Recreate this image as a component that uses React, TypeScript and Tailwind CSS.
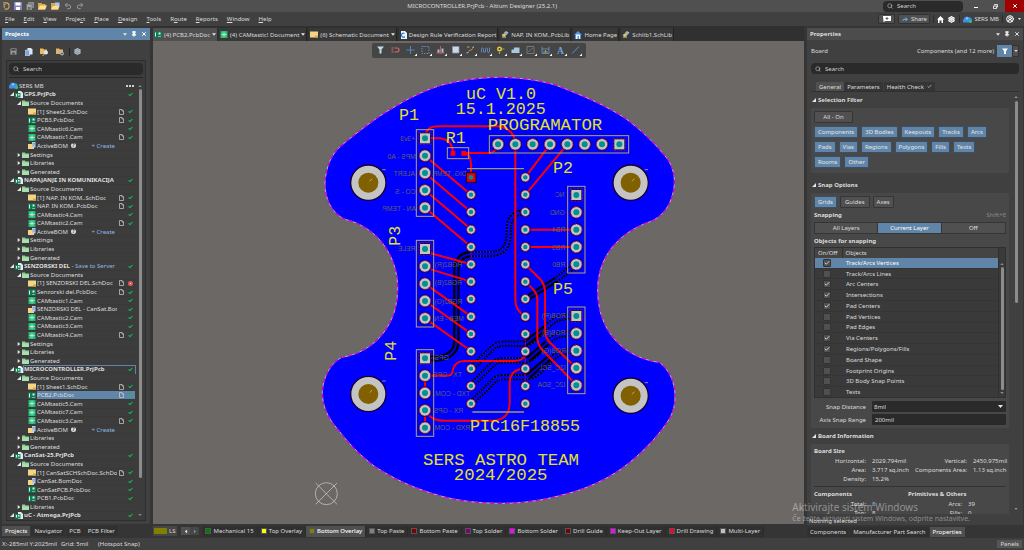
import React, { useState } from 'react';
import { Search, Settings, CircleUserRound, Pin, X, Check, Undo2, Redo2 } from 'lucide-react';

type TreeRow = {
  kind: 'project' | 'group' | 'file';
  name: string;
  icon?: 'sch' | 'pcb' | 'cam' | 'bom';
  open?: boolean;
  doc?: boolean;
  status?: 'ok' | 'error';
  link?: string;
  create?: boolean;
  selected?: boolean;
  focused?: boolean;
};

const project = (name: string, extra: Partial<TreeRow> = {}): TreeRow => ({ kind: 'project', name, open: true, status: 'ok', ...extra });
const group = (name: string, open = false): TreeRow => ({ kind: 'group', name, open });
const file = (icon: TreeRow['icon'], name: string, doc = false, extra: Partial<TreeRow> = {}): TreeRow => ({
  kind: 'file',
  icon,
  name,
  doc,
  status: 'ok',
  ...extra,
});
const activeBom: TreeRow = { kind: 'file', icon: 'bom', name: 'ActiveBOM', create: true };

const treeRows: TreeRow[] = [
  project('GPS.PrjPcb'),
  group('Source Documents', true),
  file('sch', '[1] Sheet2.SchDoc', true),
  file('pcb', 'PCB3.PcbDoc', true),
  file('cam', 'CAMtastic6.Cam'),
  file('cam', 'CAMtastic1.Cam', true),
  activeBom,
  group('Settings'),
  group('Libraries'),
  group('Generated'),
  project('NAPAJANJE IN KOMUNIKACIJA'),
  group('Source Documents', true),
  file('sch', '[1] NAP. IN KOM..SchDoc', true),
  file('pcb', 'NAP. IN KOM..PcbDoc', true),
  file('cam', 'CAMtastic4.Cam'),
  file('cam', 'CAMtastic2.Cam', true),
  activeBom,
  group('Settings'),
  group('Libraries'),
  group('Generated'),
  project('SENZORSKI DEL', { link: 'Save to Server' }),
  group('Source Documents', true),
  file('sch', '[1] SENZORSKI DEL.SchDoc', true, { status: 'error' }),
  file('pcb', 'Senzorski del.PcbDoc', true),
  file('cam', 'CAMtastic1.Cam'),
  file('bom', 'SENZORSKI DEL - CanSat.BomDoc'),
  file('cam', 'CAMtastic2.Cam'),
  file('cam', 'CAMtastic3.Cam'),
  file('cam', 'CAMtastic4.Cam', true),
  group('Settings'),
  group('Libraries'),
  group('Generated'),
  project('MICROCONTROLLER.PrjPcb', { focused: true }),
  group('Source Documents', true),
  file('sch', '[1] Sheet1.SchDoc', true),
  file('pcb', 'PCB2.PcbDoc', true, { selected: true }),
  file('cam', 'CAMtastic5.Cam'),
  file('cam', 'CAMtastic7.Cam'),
  file('cam', 'CAMtastic3.Cam', true),
  activeBom,
  group('Libraries'),
  group('Generated'),
  project('CanSat-25.PrjPcb'),
  group('Source Documents', true),
  file('sch', '[1] CanSatSCHSchDoc.SchDoc', true),
  file('bom', 'CanSat.BomDoc'),
  file('pcb', 'CanSatPCB.PcbDoc'),
  file('pcb', 'PCB1.PcbDoc'),
  group('Libraries'),
  project('uC - Atmega.PrjPcb'),
];

const menus = ['File', 'Edit', 'View', 'Project', 'Place', 'Design', 'Tools', 'Route', 'Reports', 'Window', 'Help'];
const accessKeys = [0, 0, 0, 5, 0, 0, 0, 1, 0, 0, 0];

const layers = [
  { name: 'Mechanical 15', color: '#008000' },
  { name: 'Top Overlay', color: '#ffff00' },
  { name: 'Bottom Overlay', color: '#808000', active: true },
  { name: 'Top Paste', color: '#808080' },
  { name: 'Bottom Paste', color: '#800000' },
  { name: 'Top Solder', color: '#800080' },
  { name: 'Bottom Solder', color: '#ff00ff' },
  { name: 'Drill Guide', color: '#800000' },
  { name: 'Keep-Out Layer', color: '#ff00ff' },
  { name: 'Drill Drawing', color: '#ff002a' },
  { name: 'Multi-Layer', color: '#c0c0c0' },
];

const filterRows = [
  ['Components', '3D Bodies', 'Keepouts', 'Tracks', 'Arcs'],
  ['Pads', 'Vias', 'Regions', 'Polygons', 'Fills', 'Texts'],
  ['Rooms', 'Other'],
];

const snapObjects: [string, boolean][] = [
  ['Track/Arcs Vertices', true],
  ['Track/Arcs Lines', false],
  ['Arc Centers', true],
  ['Intersections', true],
  ['Pad Centers', true],
  ['Pad Vertices', false],
  ['Pad Edges', false],
  ['Via Centers', true],
  ['Regions/Polygons/Fills', true],
  ['Board Shape', false],
  ['Footprint Origins', false],
  ['3D Body Snap Points', false],
  ['Texts', false],
];

/* ---------- small icons ---------- */

function FileIcon({ icon }: { icon: string }) {
  return (
    <svg viewBox="0 0 16 14" className="h-[7px] w-2 shrink-0">
      {icon === 'sch' && (
        <>
          <rect y="1" width="16" height="12" fill="#f3d583" />
          <path d="M10 9h6v4h-6z" fill="#d6a94c" />
        </>
      )}
      {icon === 'pcb' && (
        <>
          <rect y="1" width="16" height="12" fill="#107a54" />
          <path d="M2 3h2v8H2zM9 3h4v4H9zM8 10h6v1H8z" fill="#d5f5e5" />
        </>
      )}
      {icon === 'cam' && (
        <>
          <rect x="1" width="14" height="14" fill="#1fb573" />
          <path d="M8 1v12M2 7h12M4 3l8 8M12 3l-8 8" stroke="#c9f7de" strokeWidth="1.3" />
        </>
      )}
      {icon === 'bom' && (
        <>
          <rect y="4" width="12" height="10" fill="#f3d583" />
          <path d="M8 0h7v11H8z" fill="#b9cbe6" />
          <path d="M9 3h5M9 6h5" stroke="#5677a5" />
        </>
      )}
    </svg>
  );
}

function ProjectIcon() {
  return (
    <svg viewBox="0 0 16 14" className="h-[7px] w-2 shrink-0">
      <path d="M6 0h6l4 4v10H6z" fill="#e4ecf2" />
      <rect y="4" width="11" height="9" fill="#158a60" />
      <path d="M2 6h2v5H2zM6 6h3v3H6z" fill="#d5f5e5" />
    </svg>
  );
}

function FolderIcon() {
  return (
    <svg viewBox="0 0 14 12" className="h-[6px] w-[7px] shrink-0">
      <path d="M0 1h6l1 2h7v9H0z" fill="#8fcf96" />
      <path d="M0 5h14v7H0z" fill="#a9dfae" />
    </svg>
  );
}

function Arrow({ open }: { open?: boolean }) {
  return (
    <svg viewBox="0 0 6 6" className="h-[4px] w-[4px] shrink-0">
      <path d={open ? 'M6 0v6H0z' : 'M1 0l4 3-4 3z'} fill="#e6e6e6" />
    </svg>
  );
}

function Caret({ className = 'h-[3px] w-[5px]' }: { className?: string }) {
  return (
    <svg viewBox="0 0 10 6" className={`${className} shrink-0`}>
      <path d="M0 0h10L5 6z" fill="#e6e6e6" />
    </svg>
  );
}

function Cloud() {
  return (
    <svg viewBox="0 0 18 14" className="h-[7px] w-[9px] shrink-0">
      <path d="M1 13a4 4 0 0 1 1-7 5 5 0 0 1 9-3 5 5 0 0 1 3 10z" fill="#3c8fe6" />
      <path d="M5 4a5 5 0 0 1 7 0l-4 4z" fill="#8cc5ff" />
      <circle cx="15" cy="11" r="3" fill="#35c46a" />
    </svg>
  );
}

function DocIcon() {
  return (
    <svg viewBox="0 0 10 12" className="h-[6px] w-[5px]">
      <path d="M1 1h5l3 3v7H1zM6 1v3h3" fill="none" stroke="#d0d0d0" strokeWidth="1.4" />
    </svg>
  );
}

function PanelButtons() {
  return (
    <div className="flex items-center gap-1">
      <button aria-label="Panel menu"><Caret className="h-[3px] w-1" /></button>
      <button aria-label="Pin panel"><Pin className="h-[6px] w-[6px] fill-white" strokeWidth={3} /></button>
      <button aria-label="Close panel"><X className="h-[6px] w-[6px]" strokeWidth={4} /></button>
    </div>
  );
}

function SearchBox({ label, className }: { label: string; className: string }) {
  return (
    <label className={`flex items-center gap-1 rounded-sm bg-[#2a2a2a] px-1 ${className}`}>
      <Search className="h-[6px] w-[6px] shrink-0" strokeWidth={2} />
      <input aria-label={label} placeholder="Search" className="w-full min-w-0 bg-transparent outline-none placeholder:text-[#d0d0d0]" />
    </label>
  );
}

/* ---------- title bar and menu ---------- */

function TitleBar() {
  return (
    <header className="shrink-0">
      <div className="grid h-3 grid-cols-3 items-center bg-[#505050]">
        <div className="flex items-center gap-[4px] pl-[2px]">
          <svg viewBox="0 0 16 18" className="h-[8px] w-[8px]">
            <path d="M2 2h6a7 7 0 0 1 0 14H5M2 6h5M4 13V8" fill="none" stroke="#d2ad60" strokeWidth="2.4" />
          </svg>
          <button aria-label="Save">
            <svg viewBox="0 0 16 16" className="h-2 w-2">
              <path d="M0 0h16v16H0z" fill="#8181c4" />
              <path d="M3 1h10v6H3zM4 10h8v6H4z" fill="#fff" />
            </svg>
          </button>
          <button aria-label="Save all">
            <svg viewBox="0 0 16 16" className="h-2 w-2">
              <path d="M4 0h12v12H4z" fill="#8c8c8c" />
              <path d="M1 4h11v12H1z" fill="#a5a5a5" stroke="#5a5a5a" />
              <path d="M4 10h5v5H4z" fill="#666" />
            </svg>
          </button>
          <button aria-label="Open">
            <svg viewBox="0 0 18 16" className="h-2 w-[9px]">
              <path d="M0 2h7l2 2h6v11H0z" fill="#d9a74a" />
              <path d="M4 7h14l-4 8H0z" fill="#ffdf8e" />
            </svg>
          </button>
          <button aria-label="Open project">
            <svg viewBox="0 0 18 16" className="h-2 w-[9px]">
              <path d="M0 2h7l2 2h6v11H0z" fill="#d9a74a" />
              <path d="M8 1h9v8H8z" fill="#aacbed" />
              <path d="M4 8h13l-3 7H0z" fill="#ffdf8e" />
            </svg>
          </button>
          <button aria-label="Undo"><Undo2 className="h-2 w-2 text-[#9a9a9a]" strokeWidth={3} /></button>
          <button aria-label="Redo"><Redo2 className="h-2 w-2 text-[#9a9a9a]" strokeWidth={3} /></button>
        </div>
        <h1 className="whitespace-nowrap pl-[66px]">MICROCONTROLLER.PrjPcb - Altium Designer (25.2.1)</h1>
        <div className="flex h-full items-center justify-end">
          <SearchBox label="Search everywhere" className="h-[11px] w-20" />
          <button aria-label="Minimize" className="ml-1 flex h-full w-[18px] items-end justify-center pb-1">
            <span className="h-px w-1 bg-white" />
          </button>
          <button aria-label="Restore" className="flex h-full w-[20px] items-center justify-center">
            <svg viewBox="0 0 10 10" className="h-[5px] w-[5px]">
              <path d="M3 3V1h6v5H7M1 4h6v5H1z" fill="none" stroke="#fff" strokeWidth="1.6" />
            </svg>
          </button>
          <button aria-label="Close" className="flex h-full w-[19px] items-center justify-center bg-[#a00000]">
            <X className="h-[6px] w-[6px] text-white" strokeWidth={4} />
          </button>
        </div>
      </div>
      <div className="flex h-[14px] items-center justify-between bg-[#404040]">
        <nav className="flex gap-[9px] pl-[5px]">
          {menus.map((menu, i) => (
            <button key={menu}>
              {menu.slice(0, accessKeys[i])}
              <u>{menu[accessKeys[i]]}</u>
              {menu.slice(accessKeys[i] + 1)}
            </button>
          ))}
        </nav>
        <div className="flex items-center gap-[3px] pr-[3px]">
          <button aria-label="Comment" className="flex h-[10px] w-[17px] items-center justify-center rounded-[1px] border border-[#303030] bg-[#505050]">
            <svg viewBox="0 0 16 12" className="h-[6px] w-2">
              <path d="M0 0h16v10H5l-4 2z" fill="#fff" />
              <path d="M8 2v6M5 5h6" stroke="#444" strokeWidth="1.6" />
            </svg>
          </button>
          <button className="flex h-[10px] w-8 items-center justify-center gap-[3px] rounded-[1px] border border-[#303030] bg-[#505050]">
            <svg viewBox="0 0 12 10" className="h-[5px] w-[6px]">
              <path d="M0 9c0-4 3-6 7-6V0l5 5-5 4V6C4 6 2 7 0 9z" fill="#5aa2e8" />
            </svg>
            Share
          </button>
          <span className="h-2 w-px bg-[#2c2c2c]" />
          <button aria-label="Home">
            <svg viewBox="0 0 14 14" className="h-[7px] w-[7px]">
              <path d="M0 7l7-7 7 7h-2v7H9V9H5v5H2V7z" fill="#fff" />
            </svg>
          </button>
          <button aria-label="Settings" className="mx-px"><Settings className="h-[7px] w-[7px] text-white" strokeWidth={4} /></button>
          <span className="h-2 w-px bg-[#2c2c2c]" />
          <button className="flex items-center gap-[2px]"><Cloud />SERS MB</button>
          <span className="h-2 w-px bg-[#2c2c2c]" />
          <button aria-label="Account" className="flex items-center gap-1">
            <CircleUserRound className="h-2 w-2 text-white" strokeWidth={3} />
            <Caret className="h-[2px] w-[3px]" />
          </button>
        </div>
      </div>
    </header>
  );
}

/* ---------- left panel ---------- */

function TreeItem({ row }: { row: TreeRow }) {
  const indent = row.kind === 'project' ? 'pl-[3px]' : row.kind === 'group' ? 'pl-[10px]' : 'pl-[20px]';
  return (
    <li className={`flex min-h-0 flex-1 items-center border-t border-[#393939] ${indent}`}>
      {row.kind !== 'file' && <Arrow open={row.open} />}
      <span className="ml-[1px] mr-[1px] flex items-center">
        {row.kind === 'project' && <ProjectIcon />}
        {row.kind === 'group' && <FolderIcon />}
        {row.icon && <FileIcon icon={row.icon} />}
      </span>
      <div
        className={`flex h-full min-w-0 flex-1 items-center ${row.selected ? 'bg-[#6085a8]' : ''} ${
          row.focused ? 'outline outline-[#6085a8]' : ''
        }`}
      >
        <span className={`min-w-0 overflow-hidden whitespace-nowrap ${row.kind === 'project' ? 'font-bold' : ''}`}>
          {row.name}
          {row.link && (
            <span className="font-normal">
              {' - '}
              <a href="#save" className="text-[#8cb8e4]">{row.link}</a>
            </span>
          )}
        </span>
        {row.create && (
          <>
            <span className="ml-[3px] flex h-[5px] w-[5px] items-center justify-center rounded-full bg-[#dedede] text-[5px] font-bold leading-none text-[#333]">?</span>
            <a href="#create" className="ml-auto mr-5 text-[#8cb8e4]">+ Create</a>
          </>
        )}
        {!row.create && (
          <span className="ml-auto flex w-[18px] shrink-0 items-center justify-end gap-[4px] pr-[2px]">
            {row.doc && <DocIcon />}
            {row.status === 'ok' && <Check className="h-[5px] w-[5px] text-[#10c45a]" strokeWidth={5} />}
            {row.status === 'error' && <span className="h-[5px] w-[5px] rounded-full border-[2px] border-[#e05a5a] bg-white" />}
          </span>
        )}
      </div>
    </li>
  );
}

function ProjectsPanel() {
  const tabs = ['Projects', 'Navigator', 'PCB', 'PCB Filter'];
  return (
    <aside className="flex w-[153px] shrink-0 flex-col pt-[2px]">
      <section className="ml-[2px] mr-[3px] flex min-h-0 flex-1 flex-col bg-[#404040]">
        <div className="flex h-3 shrink-0 items-center justify-between bg-[#6085a8] px-[3px] text-white">
          <h2 className="font-bold">Projects</h2>
          <PanelButtons />
        </div>
        <div className="flex h-5 shrink-0 items-center gap-2 pl-2 pt-[3px]">
          <button aria-label="Save project">
            <svg viewBox="0 0 16 16" className="h-[7px] w-[7px]">
              <path d="M1 1h14v14H1z" fill="#9a9a9a" />
              <path d="M3 2h10v4H3zM5 10h6v5H5z" fill="#4a4a4a" />
            </svg>
          </button>
          <button aria-label="Compile">
            <svg viewBox="0 0 16 16" className="h-2 w-2">
              <path d="M5 0h7l3 3v10H5z" fill="#dbe8f7" />
              <path d="M1 4h8v12H1z" fill="#7fa5d8" stroke="#e8f0fa" />
            </svg>
          </button>
          <button aria-label="Explore" className="-ml-px">
            <svg viewBox="0 0 18 16" className="h-2 w-[9px]">
              <path d="M0 1h6l2 2h6v9H0z" fill="#e7bd60" />
              <circle cx="12" cy="9" r="4" fill="#dbe8f7" />
              <path d="M9 12l-4 4" stroke="#e7bd60" strokeWidth="2" />
            </svg>
          </button>
          <button aria-label="Project options" className="-ml-px">
            <svg viewBox="0 0 18 16" className="h-2 w-[9px]">
              <path d="M0 1h6l2 2h6v9H0z" fill="#d8b56c" />
              <circle cx="12" cy="11" r="3" fill="#666" stroke="#bbb" strokeWidth="2" />
            </svg>
          </button>
          <span className="-ml-1 -mr-1 h-2 w-px bg-[#222]" />
          <button aria-label="Panel settings"><Settings className="h-[7px] w-[7px] text-[#b5c3cf]" strokeWidth={4} /></button>
        </div>
        <div className="mx-1 mb-[3px] flex min-h-0 flex-1 flex-col border border-[#2e2e2e] bg-[#3c3c3c] pt-[2px]">
          <SearchBox label="Search projects" className="mx-[2px] h-3 shrink-0" />
          <div className="mx-[2px] mt-[2px] border-b border-[#262626]" />
          <div className="mt-1 flex min-h-0 flex-1 pb-px">
            <ul className="flex min-w-0 flex-1 flex-col">
              <li className="flex min-h-0 flex-1 items-center gap-[1px] pl-[2px]">
                <Cloud />
                SERS MB
                <button aria-label="More" className="ml-auto mr-[1px] flex gap-px">
                  <span className="h-[2px] w-[2px] bg-[#d0d0d0]" />
                  <span className="h-[2px] w-[2px] bg-[#d0d0d0]" />
                  <span className="h-[2px] w-[2px] bg-[#d0d0d0]" />
                </button>
              </li>
              {treeRows.map((row, i) => (
                <TreeItem key={i} row={row} />
              ))}
            </ul>
            <div className="flex w-[10px] shrink-0 flex-col items-center justify-between py-[3px]">
              <Caret className="h-[2px] w-1 rotate-180 opacity-50" />
              <div className="w-[3px] flex-1 py-[2px]">
                <div className="h-[92%] rounded-sm bg-[#8c8c8c]" />
              </div>
              <Caret className="h-[2px] w-1 opacity-50" />
            </div>
          </div>
        </div>
      </section>
      <div className="flex h-[14px] shrink-0 items-center gap-[1px] pl-[2px]">
        {tabs.map((tab, i) => (
          <button key={tab} className={`h-[10px] px-[3px] ${i === 0 ? 'bg-[#505050] text-white' : 'bg-[#303030]'}`}>
            {tab}
          </button>
        ))}
      </div>
    </aside>
  );
}

/* ---------- board drawing ---------- */

const BOARD =
  'M555 22C610 22 670 30 721 45C800 75 870 105 931 145C975 178 1015 215 1045 252C1070 278 1080 310 1078 345C1073 400 1045 440 1005 455C905 490 848 565 848 660C848 775 915 860 1035 878C1065 903 1080 940 1080 978C1080 1010 1073 1030 1061 1050C1025 1105 975 1155 921 1195C870 1232 800 1262 741 1275C680 1292 620 1300 561 1300C490 1300 415 1292 351 1270C285 1250 230 1222 180 1190C140 1160 105 1125 70 1080C35 1040 22 1005 22 965C24 925 45 880 80 862C185 845 248 760 248 655C248 555 185 470 90 448C50 430 29 385 30 340C32 290 50 250 81 225C130 185 180 145 231 115C280 85 330 60 381 45C440 30 495 22 555 22Z';

const redTracks = [
  'M330 200C332 178 345 169 370 169H550C585 175 601 195 601 223V690C601 715 615 730 631 739',
  'M330 205H375C400 208 413 222 414 250',
  'M446 249C462 252 468 265 468 282V322',
  'M446 249H525C540 245 549 237 549 223',
  'M330 257L468 374M330 309L468 426M330 361L468 478M330 413L468 530',
  'M705 223L631 322M757 223L631 374M631 479H784M631 531H784',
  'M330 545L468 583M330 593L468 635M330 641L468 739M330 693L468 791M330 745L468 843',
  'M631 583L675 627Q690 643 690 665V780Q690 803 705 818L784 894',
  'M631 635L655 659Q667 671 667 690V800Q667 823 682 840L784 945',
  'M330 917H395C418 917 410 900 416 892C422 878 432 873 450 873H595C620 873 631 865 631 843',
  'M330 917V969M330 1021V1073',
  'M330 1021C345 1045 360 1052 390 1052H535C568 1050 584 1030 584 1000V935C586 910 600 896 631 896',
];

const solidTracks = ['M330 865H370C400 862 424 845 424 815V605C424 570 440 554 468 552', 'M631 688L725 628', 'M631 821L690 775M640 868L695 820M640 918L705 862'];

const dashedTracks = [
  'M468 552H530C570 550 581 525 581 490C580 450 590 427 631 427',
  'M725 628L784 583',
  'M468 896L535 832Q545 821 565 821H625Q645 821 660 806L705 760Q728 738 784 738',
  'M468 948L533 882Q545 871 565 871H625Q645 871 660 856L705 810Q728 790 784 790',
  'M468 1000L535 934Q545 922 565 922H630Q655 922 672 905L715 862Q738 842 784 842',
];

const silkTexts: [string, number, number, number, number][] = [
  ['uC V1.0', 558, 87, 50, 0],
  ['15.1.2025', 557, 133, 50, 0],
  ['PROGRAMATOR', 690, 181, 52, 0],
  ['P1', 282, 149, 50, 0],
  ['R1', 422, 218, 50, 0],
  ['P2', 744, 309, 50, 0],
  ['P5', 744, 671, 50, 0],
  ['P3', 254, 497, 50, -90],
  ['P4', 244, 842, 50, -90],
  ['PIC16F18855', 630, 1083, 50, 0],
  ['SERS ASTRO TEAM', 558, 1185, 52, 0],
  ['2024/2025', 557, 1231, 52, 0],
];

// Bottom overlay labels are seen from the top side, so they read mirrored.
// x is the centre of the label.
const mirroredTexts: [string, number, number][] = [
  ['+3v3', 278, 213],
  ['MPS - A0', 260, 267],
  ['ALERT', 268, 319],
  ['CO - S', 271, 371],
  ['AN - TEMP.', 251, 424],
  ['DIG. TEMP.', 402, 318],
  ['RELE', 275, 543],
  ['RGB2(R)', 400, 591],
  ['RGB2(B)', 400, 646],
  ['RGB2(G)', 400, 701],
  ['MEB - EN', 402, 752],
  ['GPS', 380, 870],
  ['TX - GPS', 398, 922],
  ['TXD - COM.', 410, 978],
  ['RX - GPS', 400, 1028],
  ['RXD - COM', 412, 1080],
  ['NC', 734, 382],
  ['GND', 727, 434],
  ['RB4', 731, 486],
  ['RB3', 731, 539],
  ['RB0', 731, 592],
  ['RGB(R)', 716, 745],
  ['RGB(B)', 716, 796],
  ['RGB(G)', 716, 848],
  ['I2C_SCL', 712, 900],
  ['I2C_SDA', 709, 952],
];

const headers = [
  { x: 330, y: 205, box: [304, 179, 52, 260] },
  { x: 330, y: 537, box: [304, 511, 52, 260] },
  { x: 330, y: 865, box: [304, 839, 52, 260] },
  { x: 784, y: 375, box: [758, 349, 52, 260] },
  { x: 784, y: 738, box: [758, 711, 52, 260] },
];

function Pad({ x, y, square = false, r = 15 }: { x: number; y: number; square?: boolean; r?: number }) {
  const outer = r + 3;
  return (
    <g>
      {square ? (
        <>
          <rect x={x - outer} y={y - outer} width={outer * 2} height={outer * 2} fill="#101018" stroke="#b000b0" strokeWidth="2" strokeDasharray="6 4" />
          <rect x={x - r} y={y - r} width={r * 2} height={r * 2} fill="#c4c4c4" />
        </>
      ) : (
        <>
          <circle cx={x} cy={y} r={outer + 2} fill="#08082c" />
          <circle cx={x} cy={y} r={outer - 1} fill="#c4c4c4" stroke="#a0108c" strokeWidth="3" strokeDasharray="7 3" />
        </>
      )}
      <circle cx={x} cy={y} r={r * 0.6} fill="#009090" />
    </g>
  );
}

function Board() {
  const pins = [0, 1, 2, 3, 4, 5, 6, 7, 8, 9, 10, 11, 12, 13];
  return (
    <svg viewBox="-486 -87 1953 1449" className="h-full w-full" role="img" aria-label="PCB layout">
      <path d={BOARD} fill="#0000ff" stroke="#b8b0b8" strokeWidth="3" />
      <path d={BOARD} fill="none" stroke="#c800dc" strokeWidth="4" strokeDasharray="14 9" />

      <g fill="none" strokeLinejoin="round">
        {dashedTracks.map((d) => (
          <g key={d}>
            <path d={d} stroke="#000" strokeWidth="18" />
            <path d={d} stroke="#2020c0" strokeWidth="18" strokeDasharray="3 6" />
            <path d={d} stroke="#0000ff" strokeWidth="8" />
          </g>
        ))}
        {solidTracks.map((d) => (
          <g key={d}>
            <path d={d} stroke="#000" strokeWidth="19" />
            <path d={d} stroke="#0000e0" strokeWidth="6" />
          </g>
        ))}
        <path d="M631 792V948M468 531V583" stroke="#800080" strokeWidth="3" />
        <path d={redTracks.join('')} stroke="#ff0000" strokeWidth="6" />
        <path d="M456 296H627M472 1026H627" stroke="#9c9c60" strokeWidth="4" />
      </g>

      {mirroredTexts.map(([text, x, y]) => (
        <text key={`${text}${y}`} transform={`translate(${x} ${y}) scale(-1 1)`} textAnchor="middle" fontSize="20" fill="#62625a" fontFamily="Liberation Sans, sans-serif">
          {text}
        </text>
      ))}

      <g fill="none" stroke="#b0a860" strokeWidth="3">
        {headers.map(({ box }) => (
          <rect key={`${box[0]}-${box[1]}`} x={box[0]} y={box[1]} width={box[2]} height={box[3]} />
        ))}
        <rect x="523" y="197" width="418" height="52" />
        <rect x="397" y="233" width="64" height="33" />
      </g>
      <path d="M407 243h14v14h-14zM439 243h14v14h-14z" fill="#ff0000" />

      {headers.map((h) => [0, 1, 2, 3, 4].map((i) => <Pad key={`${h.x}-${h.y}-${i}`} x={h.x} y={h.y + i * 52} square={i === 0} />))}
      {[0, 1, 2, 3, 4, 5, 6, 7].map((i) => (
        <Pad key={i} x={549 + i * 52} y={223} square={i === 7} />
      ))}
      {pins.map((i) => (
        <g key={i}>
          {i > 0 && <Pad x={468} y={Math.round(322 + i * 52.2)} r={11} />}
          <Pad x={631} y={Math.round(322 + i * 52.2)} r={11} />
        </g>
      ))}
      <rect x="454" y="308" width="29" height="29" fill="#e00010" stroke="#200010" strokeWidth="3" />
      <circle cx="468" cy="322" r="7" fill="#009090" />

      {[
        [160, 338],
        [947, 338],
        [160, 972],
        [947, 977],
      ].map(([x, y]) => (
        <g key={`${x}${y}`}>
          <circle cx={x} cy={y} r="53" fill="#c4c4c4" stroke="#180030" strokeWidth="4" />
          <circle cx={x} cy={y} r="30" fill="#806000" />
          <path d={`M${x + 4} ${y - 4}l7-8M${x + 42} ${y - 39}h10`} stroke="#d8d0a0" strokeWidth="2" />
        </g>
      ))}

      <g fill="#e2e222" fontFamily="Liberation Mono, monospace" textAnchor="middle">
        {silkTexts.map(([text, x, y, size, angle]) => (
          <text key={text} transform={`translate(${x} ${y}) rotate(${angle})`} fontSize={size}>
            {text}
          </text>
        ))}
      </g>

      <g fill="none" stroke="#d4d4d4" strokeWidth="2">
        <circle cx="34" cy="1271" r="33" />
        <path d="M2 1239l64 64M66 1239l-64 64" />
      </g>
    </svg>
  );
}

const tools: [string, React.ReactNode][] = [
  ['Filter', <path d="M2 2h14l-5 6v8H7V8z" fill="#bcdce8" />],
  ['Snap', <path d="M1 5h4M1 9h3M1 13h4M7 5h5a4 4 0 0 1 0 8H7" fill="none" stroke="#cf6a78" strokeWidth="2.4" />],
  ['Place', <path d="M9 1v16M1 9h16" stroke="#5583c0" strokeWidth="2" />],
  ['Select area', <path d="M2 2h14v14H2z" fill="none" stroke="#6c9bd4" strokeWidth="1.6" strokeDasharray="3 2" />],
  ['Align', <><path d="M9 1v15M1 15h16" stroke="#d05a5a" strokeWidth="2" /><path d="M3 8h4v6H3zM11 6h4v8h-4z" fill="#a8bdd8" /></>],
  ['Component', <path d="M3 2h13v13H3z" fill="#cfd8e0" stroke="#7d97b5" strokeWidth="1.5" />],
  ['Route', <><path d="M3 15l5-6h3l4-6M2 3h6" fill="none" stroke="#d3a43c" strokeWidth="2" strokeDasharray="4 1" /><path d="M13 2h3v3h-3zM1 13h3v3H1z" fill="#7fa5d8" /></>],
  ['Tune', <path d="M1 14V8q0-3 2-3t2 3v3q0 3 2 3t2-3V8q0-3 2-3t2 3v3q0 3 2 3t2-3V4" fill="none" stroke="#6c9bd4" strokeWidth="1.6" />],
  ['Via', <><circle cx="7" cy="7" r="5" fill="#ecc33c" /><circle cx="7" cy="7" r="2" fill="#444" /><path d="M7 12v5M12 7h5" stroke="#7fb45a" strokeWidth="2.4" /></>],
  ['Polygon', <path d="M1 15V8h5V4h11v11z" fill="#a9c9de" />],
  ['Cutout', <><path d="M2 2h14v14H2z" fill="none" stroke="#858585" strokeWidth="1.5" /><path d="M5 13l8-8" stroke="#858585" strokeWidth="1.5" /></>],
  ['Dimension', <><path d="M2 2v14h14V2M2 7h14" fill="none" stroke="#6c9bd4" strokeWidth="1.5" /><path d="M6 15v-4M9 15v-6M12 15v-4" stroke="#c8b060" strokeWidth="1.5" /></>],
  ['String', <text x="9" y="16" textAnchor="middle" fontSize="19" fontWeight="bold" fill="#6fa3df" fontFamily="Liberation Serif, serif">A</text>],
  ['Line', <path d="M2 16L16 2" stroke="#5b92d4" strokeWidth="2" />],
];

function DocTabs() {
  const sheet = <FileIcon icon="sch" />;
  const page = (
    <svg viewBox="0 0 14 16" className="h-2 w-[7px]">
      <path d="M2 0h8l4 4v12H2z" fill="#f2f6fb" />
      <path d="M9 5a4 4 0 1 0 1 6" fill="none" stroke="#2d7fd8" strokeWidth="2.4" />
    </svg>
  );
  const lib = (
    <svg viewBox="0 0 16 14" className="h-[7px] w-2">
      <path d="M1 8l6-4 5 3-6 5z" fill="#e2bf62" />
      <path d="M6 3l4-3 5 3-3 4z" fill="#8fbde0" />
      <path d="M2 11h8v2H2z" fill="#c7d8b8" />
    </svg>
  );
  const house = (
    <svg viewBox="0 0 16 16" className="h-2 w-2">
      <path d="M0 8l8-8 8 8h-2v8H2V8z" fill="#4a9be8" />
      <path d="M4 7h8v9H4z" fill="#eef5fc" />
      <path d="M7 10h3v6H7z" fill="#4a9be8" />
    </svg>
  );
  const tabs = [
    { icon: <FileIcon icon="pcb" />, name: '(4) PCB2.PcbDoc', menu: true },
    { icon: <FileIcon icon="cam" />, name: '(4) CAMtastic! Document', menu: true },
    { icon: sheet, name: '(6) Schematic Document', menu: true },
    { icon: page, name: 'Design Rule Verification Report' },
    { icon: lib, name: 'NAP. IN KOM..PcbLib' },
    { icon: house, name: 'Home Page' },
    { icon: lib, name: 'Schlib1.SchLib' },
  ];
  return (
    <nav className="flex h-[15px] shrink-0 items-end gap-[2px] bg-[#303030]">
      {tabs.map((tab, i) => (
        <button key={tab.name} className={`flex h-[13px] items-center gap-[2px] whitespace-nowrap px-px ${i === 0 ? 'bg-[#505050]' : 'border-r border-[#222] bg-[#383838]'}`}>
          {tab.icon}
          {tab.name}
          {tab.menu && <Caret className="h-[3px] w-1" />}
        </button>
      ))}
    </nav>
  );
}

function Editor() {
  return (
    <main className="flex min-w-0 flex-1 flex-col">
      <DocTabs />
      <div className="relative min-h-0 flex-1 bg-[#6b6866]">
        <Board />
        <div className="absolute left-1/2 top-[2px] flex h-[15px] -translate-x-1/2 items-center rounded-[2px] bg-[#454545] px-[2px]">
          {tools.map(([name, drawing], i) => (
            <button key={name} aria-label={name} className="flex h-full w-[15px] items-center justify-center">
              <svg viewBox="0 0 24 22" className="h-[11px] w-3">
                <g transform="translate(2 1)">{drawing}</g>
                {i > 1 && <path d="M24 17v5h-5z" fill="#fff" />}
              </svg>
            </button>
          ))}
        </div>
      </div>
      <div className="flex h-[14px] shrink-0 items-center overflow-hidden whitespace-nowrap bg-[#353535]">
        <button className="flex h-[10px] items-center gap-[2px] bg-[#464646] pl-[1px] pr-[2px]">
          <span className="h-[6px] w-[13px] bg-[#808000]" />
          LS
        </button>
        <button aria-label="Previous layer" className="ml-1 flex h-[8px] w-[9px] items-center justify-center bg-[#505050]">
          <Caret className="h-[3px] w-1 rotate-90" />
        </button>
        <button aria-label="Next layer" className="mr-[3px] flex h-[8px] w-[9px] items-center justify-center bg-[#464646]">
          <Caret className="h-[3px] w-1 -rotate-90 opacity-40" />
        </button>
        {layers.map((layer) => (
          <button key={layer.name} className={`flex h-[11px] items-center gap-[2px] border-r border-[#2a2a2a] px-[3px] ${layer.active ? 'bg-[#505050] font-medium text-white' : 'bg-[#303030]'}`}>
            <span className="h-[6px] w-[6px] border border-[#555]" style={{ backgroundColor: layer.color }} />
            {layer.name}
          </button>
        ))}
      </div>
    </main>
  );
}

/* ---------- right panel ---------- */

function Section({ title, children }: { title: string; children: React.ReactNode }) {
  return (
    <section className="shrink-0">
      <h3 className="flex h-4 items-center gap-[2px] pl-[1px] font-bold"><Arrow open />{title}</h3>
      <div className="rounded-[2px] bg-[#484848] px-[3px] py-[3px]">{children}</div>
    </section>
  );
}

function PropertiesPanel() {
  const [checked, setChecked] = useState(snapObjects.map(([, on]) => on));
  const toggle = (index: number) => setChecked(checked.map((on, i) => (i === index ? !on : on)));
  const chip = 'h-3 rounded-[1px] border border-[#3a4f63] bg-[#6085a8] px-[3px] text-[#e6e6e6]';
  const plain = 'h-3 rounded-[1px] border border-[#353535] bg-[#505050]';

  return (
    <aside className="flex w-[220px] shrink-0 flex-col pl-[3px] pr-[1px] pt-[2px]">
      <div className="flex min-h-0 flex-1 flex-col bg-[#404040]">
        <div className="flex h-3 shrink-0 items-center justify-between bg-[#4c4c4c] px-[3px]">
          <h2 className="font-bold">Properties</h2>
          <PanelButtons />
        </div>
        <div className="mt-1 flex h-[14px] shrink-0 items-center px-1">
          Board
          <span className="ml-auto mr-[3px]">Components (and 12 more)</span>
          <button aria-label="Filter" className="flex h-3 w-[15px] items-center justify-center bg-[#6085a8]">
            <svg viewBox="0 0 12 12" className="h-[6px] w-[6px]"><path d="M0 1h12L8 6v6H4V6z" fill="#fff" /></svg>
          </button>
          <button aria-label="Filter menu" className="flex h-3 w-[7px] items-center justify-center border border-[#333] bg-[#505050]"><Caret className="h-[2px] w-1" /></button>
        </div>
        <SearchBox label="Search properties" className="mx-1 mt-[5px] h-[11px] shrink-0" />
        <div className="mx-1 mt-2 flex shrink-0 border-b border-[#303030] pl-[5px]">
          <button className="h-[9px] bg-[#505050] px-[3px]">General</button>
          <button className="h-[9px] bg-[#353535] px-[3px]">Parameters</button>
          <button className="ml-[1px] flex h-[9px] items-center gap-[3px] bg-[#353535] px-[3px]">
            Health Check <Check className="h-[5px] w-[5px]" strokeWidth={3} />
          </button>
        </div>
        <div className="flex min-h-0 flex-1 overflow-hidden">
          <div className="flex min-w-0 flex-1 flex-col overflow-hidden pl-1">
            <Section title="Selection Filter">
              <div className="flex flex-col gap-[3px] pb-[2px]">
                <button className={`${plain} w-[39px]`}>All - On</button>
                {filterRows.map((row) => (
                  <div key={row[0]} className="flex gap-[3px]">
                    {row.map((name) => (
                      <button key={name} className={chip}>{name}</button>
                    ))}
                  </div>
                ))}
              </div>
            </Section>
            <div className="h-1 shrink-0" />
            <Section title="Snap Options">
              <div className="flex gap-[3px]">
                <button className={chip}>Grids</button>
                <button className={`${plain} px-[4px]`}>Guides</button>
                <button className={`${plain} px-[3px]`}>Axes</button>
              </div>
              <div className="flex h-[14px] items-center justify-between">
                <h4 className="font-bold">Snapping</h4>
                <span className="text-[#8a8a8a]">Shift+E</span>
              </div>
              <div className="grid h-3 grid-cols-3 divide-x divide-[#353535] border border-[#353535] bg-[#505050]">
                <button>All Layers</button>
                <button className="bg-[#6085a8] text-white">Current Layer</button>
                <button>Off</button>
              </div>
              <h4 className="flex h-[13px] items-center font-bold">Objects for snapping</h4>
              <div className="flex border border-[#303030] bg-[#3a3a3a]">
                <table className="h-[149px] flex-1 border-collapse text-left">
                  <thead>
                    <tr className="h-[10px] bg-[#444]">
                      <th className="w-[27px] border-r border-[#303030] p-0 pl-[3px] font-normal">On/Off</th>
                      <th className="p-0 pl-[3px] font-normal">Objects</th>
                    </tr>
                  </thead>
                  <tbody>
                    {snapObjects.map(([name], i) => (
                      <tr key={name} className={i === 0 ? 'bg-[#6085a8] text-white' : 'border-t border-[#353535]'}>
                        <td className="p-0">
                          <span className="ml-[8px] grid h-2 w-2">
                            <input
                              id={`snap-${i}`}
                              type="checkbox"
                              checked={checked[i]}
                              onChange={() => toggle(i)}
                              className="col-start-1 row-start-1 h-2 w-2 appearance-none rounded-[1px] border border-[#333] bg-[#505050]"
                            />
                            {checked[i] && <Check className="pointer-events-none col-start-1 row-start-1 m-auto h-[6px] w-[6px] text-white" strokeWidth={3} />}
                          </span>
                        </td>
                        <td className="p-0 pl-1"><label htmlFor={`snap-${i}`}>{name}</label></td>
                      </tr>
                    ))}
                  </tbody>
                </table>
                <div className="flex w-[7px] flex-col items-center gap-[2px] border-l border-[#303030] pb-[3px] pt-[15px]">
                  <Caret className="h-[2px] w-1 rotate-180 opacity-50" />
                  <div className="w-[3px] flex-1 rounded-sm bg-[#8c8c8c]" />
                  <Caret className="h-[2px] w-1 opacity-50" />
                </div>
              </div>
              <div className="mt-[3px] grid grid-cols-[52px_1fr] items-center gap-x-[6px] gap-y-[2px]">
                <label htmlFor="snap-distance" className="text-right">Snap Distance</label>
                <div className="grid h-[11px] items-center rounded-[1px] bg-[#2a2a2a]">
                  <select id="snap-distance" className="col-start-1 row-start-1 appearance-none bg-transparent pl-[2px] outline-none">
                    <option>8mil</option>
                  </select>
                  <span className="pointer-events-none col-start-1 row-start-1 mr-[3px] justify-self-end"><Caret /></span>
                </div>
                <label htmlFor="snap-range" className="whitespace-nowrap text-right">Axis Snap Range</label>
                <input id="snap-range" defaultValue="200mil" className="h-[11px] min-w-0 rounded-[1px] bg-[#2a2a2a] px-[3px] outline-none" />
              </div>
            </Section>
            <Section title="Board Information">
              <h4 className="font-bold">Board Size</h4>
              <dl className="grid grid-cols-[52px_1fr_52px_38px] gap-x-[6px] pt-[2px] leading-[9px]">
                <dt className="text-right">Horizontal:</dt>
                <dd>2029.794mil</dd>
                <dt className="text-right">Vertical:</dt>
                <dd>2450.975mil</dd>
                <dt className="text-right">Area:</dt>
                <dd className="whitespace-nowrap">3.717 sq.inch</dd>
                <dt className="whitespace-nowrap text-right">Components Area:</dt>
                <dd className="whitespace-nowrap">1.13 sq.inch</dd>
                <dt className="text-right">Density:</dt>
                <dd>15,2%</dd>
              </dl>
              <div className="mt-[2px] border-t border-[#333] pt-[3px]" />
              <div className="flex font-bold">
                <h4 className="w-[94px]">Components</h4>
                <h4>Primitives &amp; Others</h4>
              </div>
              <dl className="grid grid-cols-[52px_1fr_52px_38px] gap-x-[6px] pt-[2px] leading-[9px]">
                <dt className="text-right">Total:</dt>
                <dd className="text-[#8cb8e4]">8</dd>
                <dt className="text-right">Arcs:</dt>
                <dd>39</dd>
                <dt className="text-right">Top:</dt>
                <dd>8</dd>
                <dt className="text-right">Fills:</dt>
                <dd>0</dd>
              </dl>
            </Section>
          </div>
          <div className="flex w-[14px] shrink-0 flex-col items-center justify-between py-1">
            <Caret className="h-[2px] w-1 rotate-180 opacity-50" />
            <div className="w-[3px] flex-1 py-[3px]">
              <div className="h-1/2 rounded-sm bg-[#8c8c8c]" />
            </div>
            <Caret className="h-[2px] w-1 opacity-50" />
          </div>
        </div>
        <p className="flex h-[11px] shrink-0 items-end pl-[2px]">Nothing selected</p>
      </div>
      <div className="flex h-[13px] shrink-0 items-center gap-[1px]">
        <button className="h-[10px] bg-[#303030] px-[3px]">Components</button>
        <button className="h-[10px] bg-[#303030] px-[3px]">Manufacturer Part Search</button>
        <button className="h-[10px] bg-[#505050] px-[3px] text-white">Properties</button>
      </div>
    </aside>
  );
}

export default function App() {
  return (
    <div className="relative flex h-screen flex-col overflow-hidden bg-[#353535] font-['Noto_Sans',sans-serif] text-[6px] leading-[8px] text-[#dcdcdc]">
      <TitleBar />
      <div className="flex min-h-0 flex-1">
        <ProjectsPanel />
        <Editor />
        <PropertiesPanel />
      </div>
      <footer className="flex h-3 shrink-0 items-center bg-[#404040] pl-[2px] pr-[2px]">
        <span className="w-[59px]">X:-285mil Y:2025mil</span>
        <span className="w-[37px]">Grid: 5mil</span>
        <span>(Hotspot Snap)</span>
        <button className="ml-auto h-2 bg-[#555] px-[3px]">Panels</button>
      </footer>

      {/* Windows activation notice */}
      <div className="pointer-events-none absolute bottom-[26px] right-[54px] text-white/40">
        <p className="text-[10px] leading-[14px]">Aktivirajte sistem Windows</p>
        <p className="text-[7px] leading-[10px]">Če želite aktivirati sistem Windows, odprite nastavitve.</p>
      </div>
    </div>
  );
}
